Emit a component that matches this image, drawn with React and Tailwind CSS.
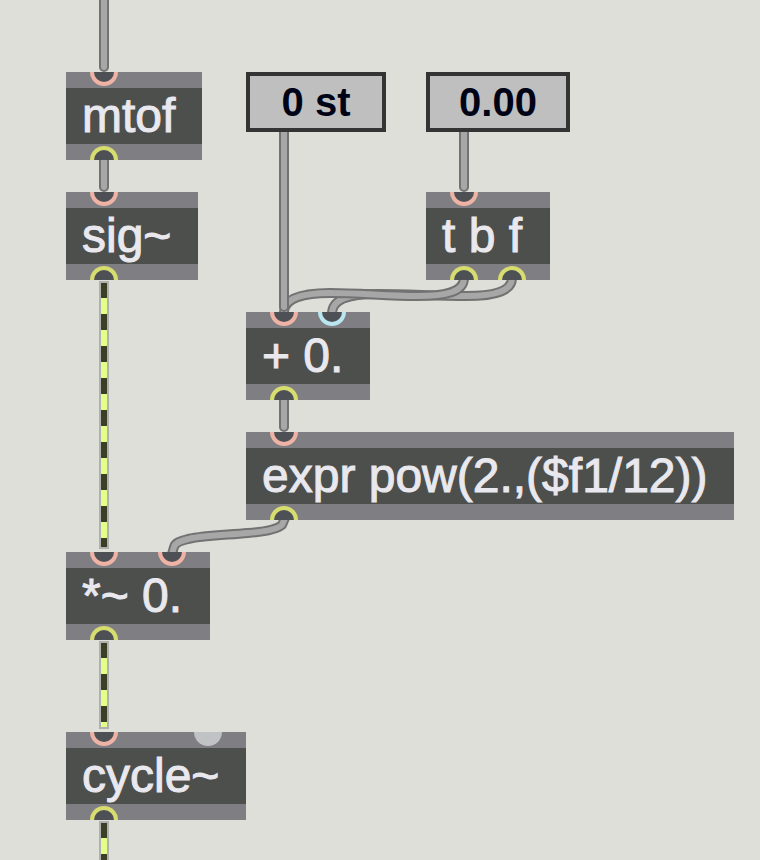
const PORT_COLORS = {
  hot: 'border-[#efb3a5]',
  cold: 'border-[#b8e5ee]',
  out: 'border-[#d8dd6f]',
};

function Inlet({ kind }) {
  if (kind === 'idle') {
    return <span className="h-[14px] w-7 rounded-b-full bg-[#c1c2c4]" />;
  }
  return (
    <span className={`h-[14px] w-7 rounded-b-full border-4 border-t-0 bg-[#4d5156] ${PORT_COLORS[kind]}`} />
  );
}

function Outlet() {
  return (
    <span className={`h-[14px] w-7 rounded-t-full border-4 border-b-0 bg-[#4d5156] ${PORT_COLORS.out}`} />
  );
}

function PatchObject({ text, place, inlets = ['hot'], outlets = 1, gap = 'gap-5' }) {
  return (
    <div className={`absolute flex flex-col bg-[#7e7e83] ${place}`}>
      <div className={`flex h-4 items-start pl-6 ${gap}`}>
        {inlets.map((kind, i) => (
          <Inlet key={i} kind={kind} />
        ))}
      </div>
      <div className="h-14 bg-[#4d4f4d] pl-4 text-5xl leading-[56px] whitespace-nowrap text-[#e9e8ee] [-webkit-text-stroke:1px_#e9e8ee]">
        {text}
      </div>
      <div className="flex h-4 items-end gap-5 pl-6">
        {Array.from({ length: outlets }, (_, i) => (
          <Outlet key={i} />
        ))}
      </div>
    </div>
  );
}

function NumberBox({ label, value, place }) {
  return (
    <input
      type="text"
      aria-label={label}
      defaultValue={value}
      className={`absolute h-[60px] border-4 border-[#343434] bg-[#bfbfbf] text-center text-[40px] leading-[52px] font-bold text-[#000316] outline-none ${place}`}
    />
  );
}

function Cord({ d }) {
  return (
    <g fill="none" strokeLinecap="round" strokeLinejoin="round">
      <path d={d} stroke="#727272" strokeWidth="10" />
      <path d={d} stroke="#a7a7a7" strokeWidth="6" />
    </g>
  );
}

function SignalCord({ x, from, to }) {
  return (
    <g>
      <rect x={x - 5} y={from} width="10" height={to - from} fill="#b0b0b0" />
      <rect x={x - 3} y={from + 2} width="6" height={to - from - 4} fill="#e4ff87" />
      <line
        x1={x}
        x2={x}
        y1={from + 2}
        y2={to - 2}
        stroke="#3b3f26"
        strokeWidth="6"
        strokeDasharray="16 16"
        strokeDashoffset="1"
      />
    </g>
  );
}

export default function App() {
  return (
    <main className="relative min-h-screen w-full overflow-hidden bg-[#dedfd9] font-['Liberation_Sans',Arial,sans-serif]">
      <svg className="absolute inset-0 h-full w-full" aria-hidden="true">
        <Cord d="M104 -10V67" />
        <Cord d="M104 150V187" />
        <Cord d="M464 120V187" />
        <Cord d="M284 390V427" />
        <Cord d="M512 278C512 290 498 296 466 296C436 296 408 294 378 294C346 294 332 300 332 314" />
        <Cord d="M464 278C464 292 446 296 417 296C387 296 360 293 330 293C304 293 284 298 284 312" />
        <Cord d="M284 120V307" />
        <Cord d="M285 518L282 525C276 530 262 532 248 533C228 535 206 535 188 539C180 541 175 543 174 547L172 554" />
        <SignalCord x={104} from={281} to={549} />
        <SignalCord x={104} from={641} to={729} />
        <SignalCord x={104} from={821} to={880} />
      </svg>

      <PatchObject text="mtof" place="left-[66px] top-[72px] w-[136px]" />
      <PatchObject text="sig~" place="left-[66px] top-[192px] w-[132px]" />
      <NumberBox label="Semitones" value="0 st" place="left-[246px] top-[72px] w-[140px]" />
      <NumberBox label="Fine tuning" value="0.00" place="left-[426px] top-[72px] w-[144px]" />
      <PatchObject text="t b f" place="left-[426px] top-[192px] w-[124px]" outlets={2} />
      <PatchObject text="+ 0." place="left-[246px] top-[312px] w-[124px]" inlets={['hot', 'cold']} />
      <PatchObject text="expr pow(2.,($f1/12))" place="left-[246px] top-[432px] w-[488px]" />
      <PatchObject
        text="*~ 0."
        place="left-[66px] top-[552px] w-[144px]"
        inlets={['hot', 'hot']}
        gap="gap-10"
      />
      <PatchObject
        text="cycle~"
        place="left-[66px] top-[732px] w-[180px]"
        inlets={['hot', 'idle']}
        gap="gap-[76px]"
      />
    </main>
  );
}
